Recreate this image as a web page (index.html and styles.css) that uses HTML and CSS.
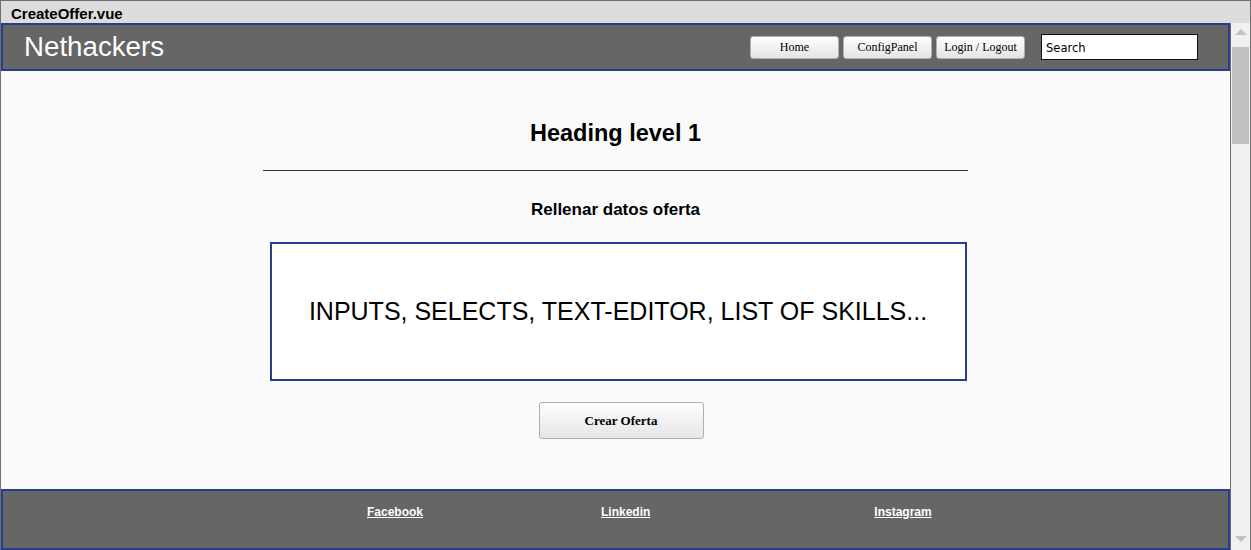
FILE: index.html
```html
<!DOCTYPE html>
<html lang="es">
<head>
<meta charset="utf-8">
<title>CreateOffer.vue</title>
<link rel="stylesheet" href="styles.css">
</head>
<body>
<div class="window">
  <div class="titlebar">CreateOffer.vue</div>
  <div class="viewport">
    <div class="page">
      <header class="header">
        <div class="brand">Nethackers</div>
        <nav class="nav">
          <button class="nav-btn">Home</button>
          <button class="nav-btn">ConfigPanel</button>
          <button class="nav-btn">Login / Logout</button>
        </nav>
        <div class="search">Search</div>
      </header>
      <main class="main">
        <h1 class="title">Heading level 1</h1>
        <hr class="rule">
        <h2 class="subtitle">Rellenar datos oferta</h2>
        <div class="form-box">INPUTS, SELECTS, TEXT-EDITOR, LIST OF SKILLS...</div>
        <button class="submit">Crear Oferta</button>
      </main>
      <footer class="footer">
        <a class="flink fb" href="#">Facebook</a>
        <a class="flink li" href="#">Linkedin</a>
        <a class="flink ig" href="#">Instagram</a>
      </footer>
    </div>
    <div class="scrollbar">
      <div class="arrow up"></div>
      <div class="thumb"></div>
      <div class="track"></div>
      <div class="arrow down"></div>
    </div>
  </div>
</div>
</body>
</html>
```
FILE: styles.css
```css
* { box-sizing: border-box; }
html, body { margin: 0; padding: 0; }
body { width: 1251px; height: 550px; overflow: hidden; background: #fafafa; font-family: "Liberation Sans", Arial, sans-serif; }

.window {
  width: 1251px; height: 550px;
  border: 1px solid #6f6f6f;
  border-bottom: none;
  display: flex; flex-direction: column;
  background: #dcdcdc;
}
.titlebar {
  height: 22px;
  padding: 5px 0 0 10px;
  font-weight: bold; font-size: 15px; line-height: 16px;
  color: #000;
  background: #dcdcdc;
}
.viewport { flex: 1; display: flex; min-height: 0; }
.page { width: 1229px; display: flex; flex-direction: column; background: #fafafa; }

.header {
  height: 48px;
  background: #666666;
  border: 2px solid #24408c;
  display: flex; align-items: center;
  padding-left: 21px;
}
.brand { color: #fff; font-size: 27.7px; line-height: 30px; flex: 1; margin-top: -1px; }
.nav { display: flex; gap: 4px; margin-top: 1px; }
.nav-btn {
  width: 89px; height: 23px;
  padding: 0;
  font-family: "Liberation Serif", "Times New Roman", serif;
  font-size: 12px; color: #000;
  background: linear-gradient(#fefefe, #e4e4e4);
  border: 1px solid #b7ae9f;
  border-radius: 3px;
}
.search {
  width: 157px; height: 26px;
  margin-left: 16px; margin-right: 30px;
  background: #fff;
  border: 1px solid #111;
  padding: 6px 0 0 4px;
  font-family: "DejaVu Sans", sans-serif; font-size: 11.5px; line-height: 14px; color: #000;
}

.main {
  flex: 1;
  display: flex; flex-direction: column; align-items: center;
  padding-top: 48px;
}
.title { margin: 0; font-size: 23.5px; line-height: 28px; font-weight: bold; color: #000; }
.rule { width: 705px; margin: 23px 0 0 0; border: none; border-top: 1px solid #333; height: 0; }
.subtitle { margin: 29px 0 0 0; font-size: 17px; line-height: 20px; font-weight: bold; color: #000; }
.form-box {
  margin: 22px 0 0 5px;
  width: 697px; height: 139px;
  background: #fff;
  border: 2px solid #24408c;
  display: flex; align-items: center; justify-content: center;
  font-size: 25px; color: #000;
}
.submit {
  margin-top: 21px; margin-left: 11px;
  width: 165px; height: 37px;
  font-family: "Liberation Serif", "Times New Roman", serif;
  font-weight: bold; font-size: 13px; color: #000;
  background: linear-gradient(#fdfdfd, #e6e6e6);
  border: 1px solid #b7ae9f;
  border-radius: 3px;
}

.footer {
  height: 61px;
  background: #666666;
  border: 2px solid #24408c;
  display: flex; align-items: flex-start;
  padding: 14px 0 0 364px;
}
.flink { color: #fff; font-weight: bold; font-size: 12px; line-height: 15px; text-decoration: underline; }
.li { margin-left: 178px; }
.ig { margin-left: 224px; }

.scrollbar {
  width: 20px;
  border-left: 1px solid #707070;
  background: #f0f0f0;
  display: flex; flex-direction: column;
  position: relative;
}
.arrow { height: 22px; position: relative; }
.arrow::after {
  content: ""; position: absolute; left: 4px;
  border-left: 6px solid transparent; border-right: 6px solid transparent;
}
.arrow.up::after { top: 6px; border-bottom: 6px solid #c2c2c2; }
.arrow.down::after { top: 8px; border-top: 6px solid #c2c2c2; }
.thumb { height: 97px; margin: 2px 1px 0 1px; background: #c1c1c1; }
.track { flex: 1; }
```
